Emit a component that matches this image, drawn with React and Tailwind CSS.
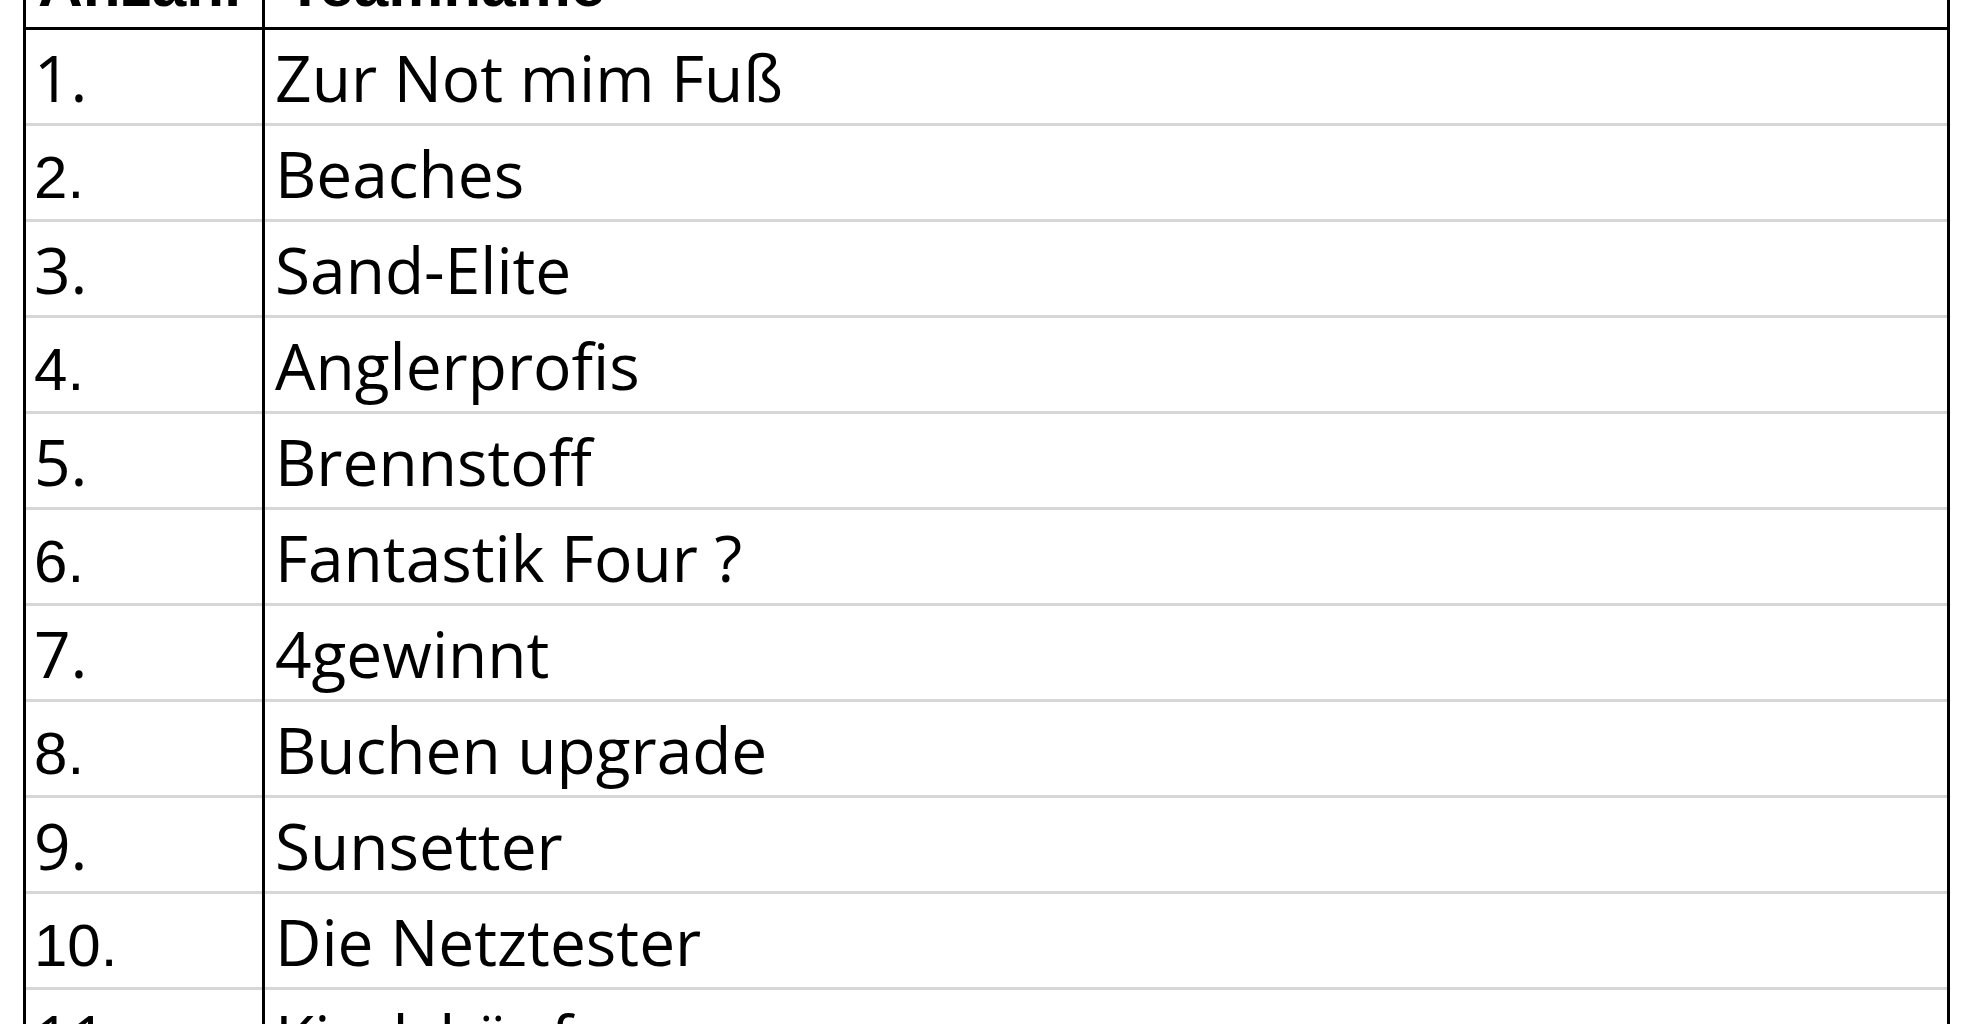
const teams = [
  "Zur Not mim Fuß",
  "Beaches",
  "Sand-Elite",
  "Anglerprofis",
  "Brennstoff",
  "Fantastik Four ?",
  "4gewinnt",
  "Buchen upgrade",
  "Sunsetter",
  "Die Netztester",
  "Kindsköpfe",
];

const calibri = { fontFamily: "'Open Sans', Lato, sans-serif" };
const helvetica = { fontFamily: "'Liberation Sans', Arial, sans-serif" };

function HeaderCell({ label, className }) {
  return (
    <div className={`h-[30px] border-b-[3px] border-black overflow-hidden ${className}`}>
      <div
        className="-mt-[46px] text-[62px] leading-none font-bold text-black whitespace-nowrap"
        style={helvetica}
      >
        {label}
      </div>
    </div>
  );
}

function BodyCell({ children, even, numeric, className }) {
  const font = numeric && even ? helvetica : calibri;
  const size = numeric && even ? "text-[60px] pb-[11px]" : "text-[64px] pb-[13px]";
  return (
    <div
      className={`h-[96px] border-b-[3px] border-[#d6d6d6] flex items-end leading-none text-black whitespace-nowrap ${size} ${className}`}
      style={font}
    >
      {children}
    </div>
  );
}

export default function App() {
  return (
    <div className="w-[1980px] h-[1024px] bg-white overflow-hidden">
      <div className="ml-[23px] w-[1927px] border-x-[3px] border-black flex">
        {/* Anzahl column */}
        <div className="w-[239px] border-r-[3px] border-black flex flex-col shrink-0">
          <HeaderCell label="Anzahl" className="pl-[12px]" />
          {teams.map((_, i) => (
            <BodyCell key={i} numeric even={(i + 1) % 2 === 0} className="pl-[8px]">
              {i + 1}.
            </BodyCell>
          ))}
        </div>

        {/* Teamname column */}
        <div className="flex-1 flex flex-col">
          <HeaderCell label="Teamname" className="pl-[21px]" />
          {teams.map((name, i) => (
            <BodyCell key={i} className="pl-[10px]">
              {name}
            </BodyCell>
          ))}
        </div>
      </div>
    </div>
  );
}
